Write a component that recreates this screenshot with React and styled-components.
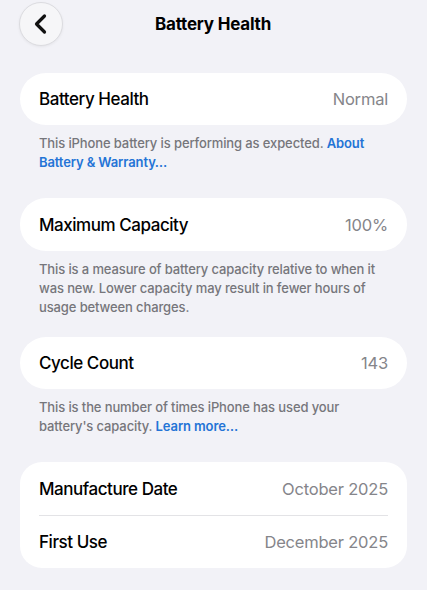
import React from "react";
import styled, { createGlobalStyle } from "styled-components";

const Global = createGlobalStyle`
  body {
    margin: 0;
    background: #f2f2f7;
    font-family: Inter, "Noto Sans", sans-serif;
    -webkit-font-smoothing: antialiased;
  }
`;

const Page = styled.div`
  width: 427px;
  min-height: 590px;
  padding: 2px 20px 0;
  box-sizing: border-box;
`;

const Header = styled.div`
  display: grid;
  grid-template-columns: 44px 1fr 44px;
  align-items: center;
  height: 44px;
  margin-left: -1px;
`;

const BackButton = styled.button`
  width: 44px;
  height: 44px;
  border-radius: 50%;
  border: 1px solid #dcdce0;
  background: #f6f6f8;
  box-shadow: 0 1px 3px rgba(0, 0, 0, 0.06);
  display: flex;
  align-items: center;
  justify-content: center;
  padding: 0;
`;

const Title = styled.h1`
  margin: 0;
  text-align: center;
  font-size: 17px;
  font-weight: 700;
  color: #000;
  letter-spacing: -0.2px;
`;

const Section = styled.section`
  margin-top: ${(p) => p.$top}px;
`;

const Card = styled.div`
  background: #fff;
  border-radius: ${(p) => (p.$multi ? 22 : 26)}px;
  padding: 0 19px;
`;

const Row = styled.div`
  box-sizing: border-box;
  display: flex;
  align-items: center;
  justify-content: space-between;
  height: ${(p) => p.$h || 52}px;
  border-top: ${(p) => (p.$divider ? "1px solid #e3e3e6" : "none")};
`;

const Label = styled.span`
  font-size: 17px;
  font-weight: 500;
  color: #000;
  letter-spacing: -0.45px;
`;

const Value = styled.span`
  font-size: 16.5px;
  font-weight: 400;
  color: #85858a;
  letter-spacing: -0.2px;
`;

const Footer = styled.p`
  margin: 9px 0 0;
  padding: 0 19px;
  font-size: 13px;
  line-height: 19px;
  font-weight: 500;
  color: #76767b;
  letter-spacing: -0.12px;
`;

const Link = styled.a`
  color: #2474d6;
  font-weight: 600;
  text-decoration: none;
`;

const Chevron = () => (
  <svg width="16" height="22" viewBox="0 0 16 22" fill="none">
    <path
      d="M11.5 3 L3.5 11 L11.5 19"
      stroke="#111"
      strokeWidth="3.2"
      strokeLinecap="round"
      strokeLinejoin="round"
    />
  </svg>
);

export default function App() {
  return (
    <Page>
      <Global />
      <Header>
        <BackButton aria-label="Back">
          <Chevron />
        </BackButton>
        <Title>Battery Health</Title>
        <span />
      </Header>

      <Section $top={27}>
        <Card>
          <Row>
            <Label>Battery Health</Label>
            <Value>Normal</Value>
          </Row>
        </Card>
        <Footer>
          This iPhone battery is performing as expected.{" "}
          <Link>About Battery &amp; Warranty…</Link>
        </Footer>
      </Section>

      <Section $top={26}>
        <Card>
          <Row $h={53}>
            <Label>Maximum Capacity</Label>
            <Value>100%</Value>
          </Row>
        </Card>
        <Footer>
          This is a measure of battery capacity relative to when it was new.
          Lower capacity may result in fewer hours of usage between charges.
        </Footer>
      </Section>

      <Section $top={20}>
        <Card>
          <Row>
            <Label>Cycle Count</Label>
            <Value>143</Value>
          </Row>
        </Card>
        <Footer>
          This is the number of times iPhone has used your battery's capacity.{" "}
          <Link>Learn more…</Link>
        </Footer>
      </Section>

      <Section $top={26}>
        <Card $multi>
          <Row $h={53}>
            <Label>Manufacture Date</Label>
            <Value>October 2025</Value>
          </Row>
          <Row $h={53} $divider>
            <Label>First Use</Label>
            <Value>December 2025</Value>
          </Row>
        </Card>
      </Section>
    </Page>
  );
}
